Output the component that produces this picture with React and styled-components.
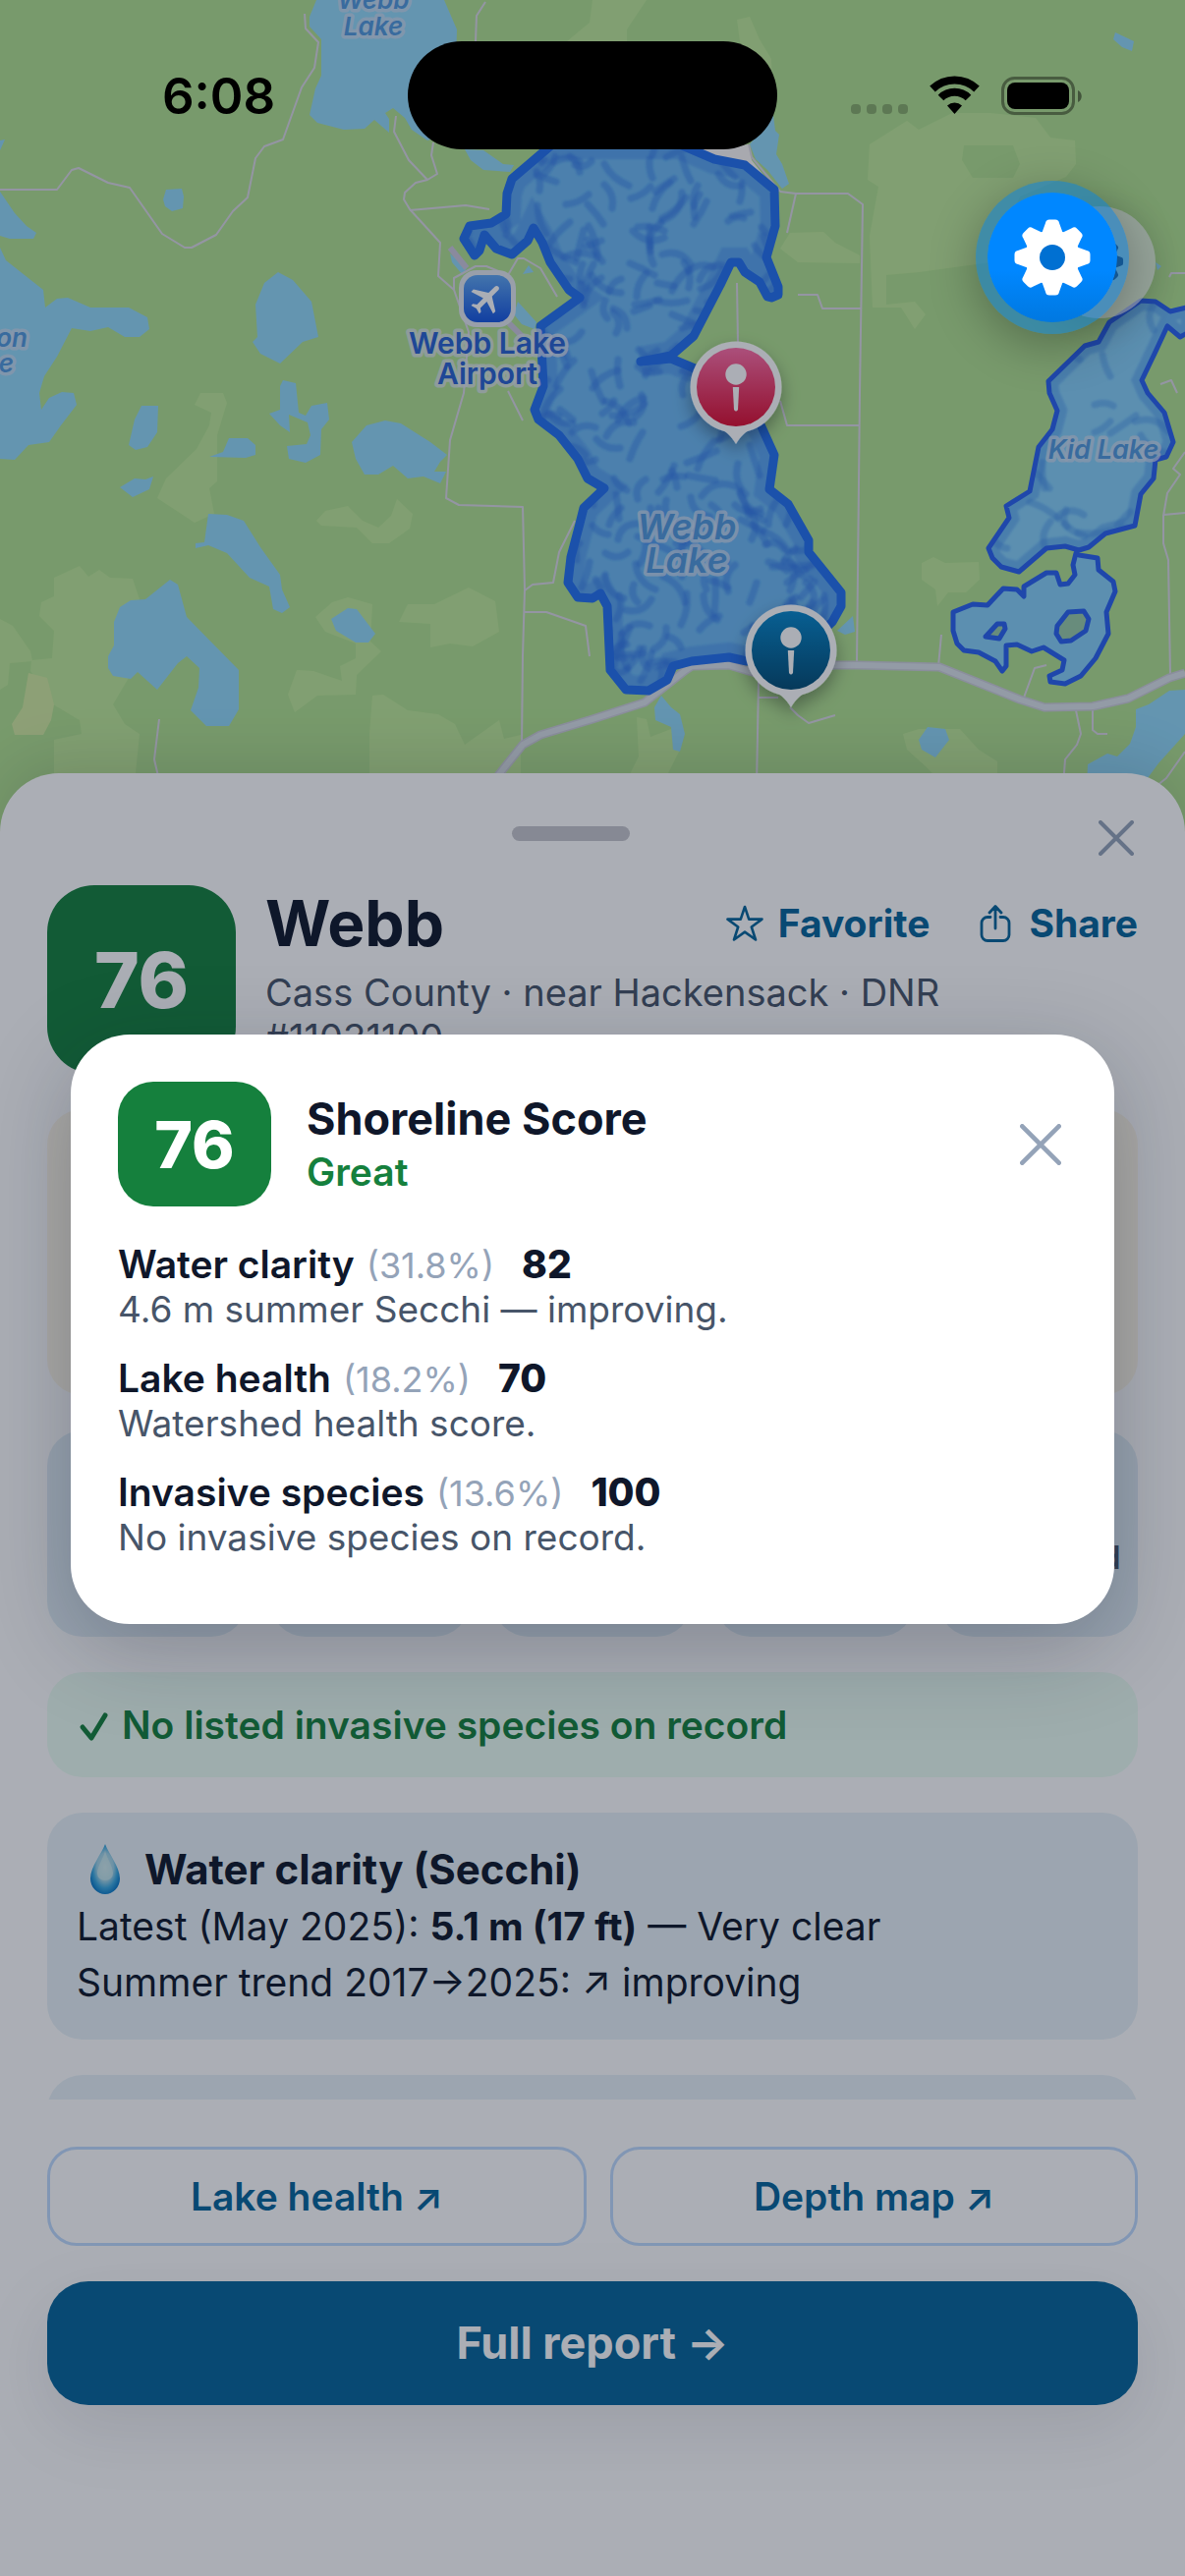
import styled, { createGlobalStyle } from "styled-components";
import { MdFlight } from "react-icons/md";

const GlobalStyle = createGlobalStyle`
  * {
    box-sizing: border-box;
  }

  body {
    margin: 0;
    background: #fff;
    color: #0f172a;
    font-family: Inter, "Liberation Sans", sans-serif;
  }

  button,
  a {
    font-family: inherit;
  }

  h1,
  h2,
  h3,
  p {
    margin: 0;
  }
`;

const WATER = [
  "838,0 820,50 820,80 850,120 850,230 835,270 818,350 840,375 910,395 965,393 990,367 1030,405 1030,362 1020,345 1040,330 1070,360 1090,395 1130,430 1200,400 1208,90 1175,0",
  "440,578 480,575 486,600 484,635 455,645 437,630 432,610",
  "0,585 40,650 70,690 95,712 88,730 25,730 0,720",
  "0,755 15,795 115,885 120,938 150,912 180,908 240,938 340,940 390,970 394,1005 370,1030 330,1030 285,1000 240,1010 190,1002 150,1090 118,1150 104,1200 108,1250 130,1215 165,1198 195,1200 204,1235 160,1300 130,1350 75,1358 38,1405 0,1400",
  "735,830 775,855 825,920 843,1030 800,1045 740,1110 690,1080 668,1045 680,1030 676,930 700,865",
  "750,1160 782,1170 790,1260 808,1270 825,1240 865,1230 872,1280 850,1310 848,1390 808,1412 765,1400 760,1362 810,1355 822,1330 815,1290 765,1265 768,1320 740,1300 712,1262 740,1250 742,1180",
  "375,1240 418,1240 415,1320 390,1365 360,1373 340,1360 355,1280",
  "555,1395 590,1380 605,1338 655,1337 676,1360 676,1390 650,1397",
  "932,1350 970,1300 1020,1283 1060,1292 1140,1350 1182,1388 1165,1410 1150,1440 1180,1440 1165,1475 1120,1455 1080,1462 1040,1422 1000,1450 965,1448 940,1400",
  "318,1488 355,1462 385,1465 405,1455 395,1495 350,1517",
  "550,1570 600,1572 645,1590 690,1670 742,1755 745,1800 768,1855 745,1872 722,1860 712,1790 660,1765 600,1690 550,1665 517,1675 517,1658 540,1655",
  "450,1770 470,1785 495,1885 632,2045 632,2165 605,2218 545,2218 505,2170 525,2100 527,2040 495,2005 470,2025 415,2105 365,2052 345,2073 300,2065 286,2040 286,2005 302,1970 302,1900 318,1855 345,1832 385,1830",
  "920,1856 945,1860 992,1935 975,1963 940,1963 890,1925 877,1890",
  "1190,775 1235,820 1225,840 1195,800",
  "1370,920 1420,985 1415,1005 1380,990 1360,960",
  "1230,455 1280,460 1330,500 1360,505 1350,525 1278,520 1245,490",
  "1985,440 2045,350 2052,400 2062,410 2055,470 2070,500 2088,560 2070,575 2030,520 2000,485",
  "2950,100 3000,125 2995,155 2970,145 2945,120",
  "2215,1925 2258,1882 2262,1930 2235,1938",
  "1750,2125 1775,2160 1800,2180 1812,2240 1800,2295 1780,2290 1775,2220 1735,2200 1732,2160",
  "2455,2220 2500,2225 2512,2260 2475,2312 2440,2290 2430,2260",
  "3136,2105 3095,2108 3040,2150 3005,2165 3005,2220 2990,2270 2955,2310 2930,2300 2878,2335 2875,2400 3020,2400 3065,2330 3136,2240",
  "1398,810 1412,830 1382,838",
  "0,430 14,425 0,460",
  "3058,800 3072,812 3062,826",
];

const MEADOW = [
  "1568,0 1710,0 1660,90 1660,125 1500,125 1560,70",
  "1950,60 1985,50 2010,120 2040,180 2050,420 1960,150",
  "2300,440 2400,370 2430,395 2520,345 2620,345 2740,360 2780,420 2845,430 2848,500 2820,540 2700,600 2620,800 2430,830 2345,840 2345,930 2420,920 2450,960 2420,1005 2385,940 2310,940 2300,720 2325,570 2295,550",
  "2090,710 2180,708 2210,740 2275,780 2275,805 2110,800 2065,760",
  "530,1200 590,1200 600,1230 575,1330 575,1470 555,1490 567,1570 515,1595 415,1520 440,1460 520,1370 555,1300 560,1260 515,1235",
  "143,1765 210,1728 235,1762 262,1740 290,1765 350,1768 370,1830 320,1900 300,2060 340,2070 300,2150 330,2210 368,2240 360,2360 340,2400 143,2400 143,2260 215,2240 210,2200 140,2150 80,2050 83,2015 138,2010 143,1925 105,1880 110,1840 143,1820",
  "0,1890 35,1910 80,1990 85,2020 25,2025 20,2090 0,2105",
  "838,1590 860,1560 920,1545 960,1590 1000,1610 1035,1575 1050,1525 1092,1570 1085,1615 1030,1660 985,1660 945,1610 850,1605",
  "835,1885 880,1840 920,1825 985,1845 980,1960 1010,1990 945,2060 940,2120 840,2125 780,2175 762,2120 785,2045 830,2048 905,2080 900,2035 940,2010 940,1965 860,1930",
  "1055,1900 1080,1845 1150,1845 1240,1795 1310,1835 1320,1930 1250,1975 1190,1965 1140,1978 1138,1905",
  "985,2125 1015,2120 1080,2170 1160,2180 1205,2210 1230,2275 1320,2200 1335,2255 1378,2245 1378,2400 978,2400 978,2240",
  "2440,1720 2470,1700 2500,1718 2590,1715 2592,1770 2555,1808 2510,1808 2480,1850 2475,1800 2440,1770",
  "2390,2240 2430,2225 2540,2225 2590,2290 2640,2325 2638,2400 2500,2400 2450,2340 2400,2290",
  "1685,2190 1710,2195 1720,2250 1775,2225 1800,2290 1760,2380 1650,2400 1690,2310",
];

const FOREST_GAP = "2550,445 2680,445 2700,500 2680,543 2575,543 2545,490";
const FIELD = "75,2055 125,2070 142,2150 135,2200 115,2243 38,2243 30,2210 60,2160";
const CLEARING = "1850,455 1980,440 1990,490 2050,575 1970,510 1890,485";

const ROADS = [
  "0,580 152,580 190,520 208,514 285,557 342,573 430,715 490,757 507,757 572,718 615,645 655,602 677,482 700,447 748,427 798,268 833,208 842,128 808,88 805,42",
  "1285,5 1262,48 1258,125",
  "1047,355 1042,402 1082,488 1132,548 1157,530 1142,475 1147,435",
  "1132,548 1100,558 1072,588 1068,608 1085,640 1165,740 1160,843 1200,885 1240,1015 1228,1200 1190,1345 1180,1520 1215,1543 1382,1548 1388,1800 1384,2000 1380,2270",
  "1085,642 1232,627 1295,638",
  "1200,885 1200,848 1258,813 1288,813 1345,840 1370,788 1385,788 1430,818 1475,905",
  "1522,1590 1480,1685 1463,1778 1410,1784 1388,1803",
  "1385,1868 1445,1868 1550,1910 1560,2005",
  "1345,1195 1382,1283",
  "420,2197 408,2320 418,2370",
  "2065,585 2105,590 2245,592 2282,625 2276,1200 2268,2025",
  "2105,592 2082,710",
  "1950,865 1952,1050",
  "2110,900 2162,900 2176,943 2280,942",
  "2065,1225 2082,1298 2275,1300",
  "1980,440 1990,480 2065,585",
  "2006,2080 2003,2400",
  "2006,2131 2060,2131",
  "2090,2160 2110,2185 2140,2207 2210,2183",
  "2492,1937 2482,2035",
  "2708,2130 2738,2040 2768,2030",
  "2848,2168 2860,2240 2850,2275 2818,2318 2812,2400",
  "2890,2165 2892,2230 2905,2240 2930,2240",
  "3136,1380 3105,1430 3122,1448 3090,1505 3078,1575 3078,1660 3092,1710 3096,2060",
  "3078,1572 3136,1567",
  "3093,845 3100,833 3136,835",
  "3070,1172 3100,1162 3115,1200",
  "3136,2295 3085,2375 3060,2400",
];

const HIGHWAY =
  "1300,2400 1320,2365 1382,2275 1430,2245 1568,2195 1705,2145 1815,2045 1830,2035 1930,2030 2000,2055 2210,2030 2268,2032 2485,2038 2700,2135 2765,2160 2890,2157 2985,2133 3095,2070 3136,2055";

const WEBB_LAKE =
  "1460,440 1355,545 1342,590 1340,655 1300,680 1243,690 1228,730 1255,780 1270,765 1282,718 1312,760 1355,778 1395,735 1412,695 1435,740 1455,800 1505,885 1535,910 1430,995 1438,1180 1415,1250 1425,1280 1480,1330 1530,1400 1555,1460 1598,1490 1545,1550 1535,1600 1510,1700 1503,1780 1530,1825 1568,1828 1588,1812 1608,1850 1615,2045 1655,2105 1715,2110 1765,2075 1780,2035 1830,2020 1930,2007 1975,2018 2100,2010 2203,1900 2225,1850 2225,1810 2140,1685 2140,1650 2085,1540 2035,1495 2050,1390 2010,1290 1960,1150 1838,1125 1775,1095 1695,1105 1775,1085 1835,1025 1905,870 1935,800 1955,800 1970,830 2010,860 2030,905 2040,910 2058,900 2060,875 2028,785 2052,690 2048,580 1970,505 1890,485 1800,440";

const KID_LAKE =
  "3018,918 3058,922 3096,952 3150,935 3150,1010 3122,1030 3090,995 3055,1080 3020,1160 3038,1200 3082,1260 3105,1350 3085,1395 3058,1405 3052,1460 3018,1510 3003,1605 2925,1630 2880,1670 2855,1680 2818,1668 2770,1675 2695,1745 2650,1730 2625,1705 2615,1675 2670,1580 2663,1545 2725,1500 2748,1365 2785,1310 2798,1255 2778,1200 2775,1165 2870,1055 2908,1045 2935,985";

const SOUTH_LAKE =
  "2848,1688 2855,1695 2905,1705 2906,1740 2945,1775 2950,1805 2928,1870 2933,1935 2900,2010 2860,2065 2818,2088 2780,2082 2778,2065 2810,2045 2815,2015 2762,1978 2730,1990 2692,1968 2663,1970 2662,2035 2652,2050 2635,2018 2590,1993 2550,1985 2533,1965 2523,1925 2523,1870 2575,1845 2612,1848 2655,1798 2690,1800 2710,1822 2708,1790 2770,1748 2795,1750 2805,1785 2825,1783 2845,1755 2838,1725";

const ISLANDS = [
  "2825,1868 2868,1865 2880,1890 2873,1925 2835,1955 2808,1960 2795,1935 2797,1910",
  "2608,1945 2640,1905 2658,1905 2660,1920 2645,1950",
];

// grid units -> svg units
const pts = (list) =>
  list
    .split(" ")
    .map((pair) => {
      const [x, y] = pair.split(",").map(Number);
      return `${Math.round(x / 2.6)},${Math.round(y / 3)}`;
    })
    .join(" ");

// Short depth strokes, always the same for the same seed
function depthStrokes(seed, count, x0, y0, w, h) {
  let s = seed;
  const next = () => {
    s = (s * 16807) % 2147483647;
    return s / 2147483647;
  };
  return Array.from({ length: count }, () => {
    const x = x0 + next() * w;
    const y = y0 + next() * h;
    const a = next() * Math.PI * 2;
    const bend = (next() - 0.5) * 2;
    const len = 16 + next() * 20;
    const dx = Math.cos(a) * len;
    const dy = Math.sin(a) * len;
    const p = [x, y, dx / 2 - dy * bend * 0.4, dy / 2 + dx * bend * 0.4, dx, dy];
    const [mx, my, cx, cy, ex, ey] = p.map((n) => Math.round(n));
    return `M${mx} ${my}q${cx} ${cy} ${ex} ${ey}`;
  });
}

const WEBB_STROKES = depthStrokes(77, 400, 470, 150, 390, 560);
const KID_STROKES = depthStrokes(31, 30, 1005, 310, 190, 260);

/* ---------- layout ---------- */

const Screen = styled.div`
  position: relative;
  display: flex;
  flex-direction: column;
  height: 100vh;
  overflow: hidden;
`;

const MapArea = styled.div`
  position: relative;
  flex: none;
  background: #b1e18f;

  > svg {
    display: block;
    width: 100%;
    height: auto;
  }
`;

const MapLabel = styled.text`
  font-size: ${(props) => props.$size}px;
  font-weight: 600;
  font-style: ${(props) => (props.$upright ? "normal" : "italic")};
  fill: ${(props) => (props.$upright ? "#2862d0" : "#5099dc")};
  stroke: ${(props) => (props.$upright ? "#e0e6f0" : "#ccdcf0")};
  stroke-width: 7px;
  stroke-opacity: 0.75;
  stroke-linejoin: round;
  paint-order: stroke;
  text-anchor: ${(props) => props.$anchor || "middle"};
`;

const MapButton = styled.button`
  position: absolute;
  top: 210px;
  right: 30px;
  width: 114px;
  height: 114px;
  padding: 0;
  border: 0;
  border-radius: 50%;
  background: rgba(245, 245, 250, 0.65);
  box-shadow: 0 6px 36px rgba(0, 0, 0, 0.15);
`;

const Sheet = styled.main`
  position: relative;
  display: flex;
  flex-direction: column;
  flex: 1;
  min-height: 0;
  margin-top: -73px;
  border-radius: 60px 60px 0 0;
  background: #fff;
  box-shadow: 0 -12px 60px rgba(0, 0, 0, 0.12);
`;

const SheetBar = styled.div`
  display: grid;
  grid-template-columns: 1fr 120px 1fr 44px;
  align-items: start;
  padding: 48px 48px 30px;
`;

const Grabber = styled.div`
  grid-column: 2;
  height: 15px;
  margin-top: 6px;
  border-radius: 8px;
  background: #c7c7cc;
`;

const IconButton = styled.button`
  display: flex;
  grid-column: -2;
  align-items: center;
  justify-content: center;
  width: ${(props) => props.$width}px;
  padding: 0;
  border: 0;
  background: none;
  color: #94a3b8;
`;

const SheetScroll = styled.div`
  display: flex;
  flex-direction: column;
  gap: 36px;
  flex: 1;
  min-height: 0;
  padding: 0 48px;
  overflow-y: auto;
  scrollbar-width: none;
`;

const LakeHeader = styled.header`
  display: flex;
  flex: none;
  gap: 30px;
`;

const ScoreBadge = styled.div`
  display: flex;
  flex: none;
  align-items: center;
  justify-content: center;
  width: ${(props) => (props.$large ? 192 : 156)}px;
  height: ${(props) => (props.$large ? 192 : 127)}px;
  border-radius: ${(props) => (props.$large ? 48 : 36)}px;
  background: #15803d;
  color: #fff;
  font-size: ${(props) => (props.$large ? 78 : 66)}px;
  font-weight: 800;
`;

const LakeInfo = styled.div`
  display: flex;
  flex-direction: column;
  flex: 1;
  gap: 8px;
`;

const TitleRow = styled.div`
  display: flex;
  align-items: center;
  justify-content: space-between;
`;

const LakeName = styled.h1`
  font-size: 64px;
  font-weight: 700;
  line-height: 78px;
`;

const LakePlace = styled.p`
  padding-right: 60px;
  color: #475569;
  font-size: 38px;
  line-height: 46px;
`;

const Actions = styled.div`
  display: flex;
  gap: 48px;
`;

const ActionButton = styled.button`
  display: flex;
  align-items: center;
  gap: 15px;
  padding: 0;
  border: 0;
  background: none;
  color: #06659a;
  font-size: 39px;
  font-weight: 700;
  line-height: 46px;
`;

const Card = styled.section`
  flex: none;
  min-height: ${(props) => props.$minHeight || 0}px;
  padding: 30px;
  border-radius: 36px;
  background: ${(props) => props.$background || "#e8f2f7"};
`;

const Tiles = styled.div`
  display: grid;
  grid-template-columns: repeat(5, 1fr);
  flex: none;
  gap: 24px;
`;

const Tile = styled.div`
  display: flex;
  align-items: flex-end;
  justify-content: center;
  height: 210px;
  padding-bottom: 61px;
  border-radius: 36px;
  background: #e2eff6;
  color: #475569;
  font-size: 32px;
  font-weight: 600;
`;

const ClearNotice = styled.p`
  display: flex;
  align-items: center;
  gap: 12px;
  color: #15803d;
  font-size: 39px;
  font-weight: 600;
  line-height: 47px;
`;

const CardTitle = styled.h2`
  display: flex;
  align-items: center;
  gap: 12px;
  margin-bottom: 2px;
  font-size: 42px;
  font-weight: 700;
  line-height: 55px;
`;

const CardLine = styled.p`
  font-size: 39px;
  line-height: 57px;
`;

const SheetFooter = styled.footer`
  display: flex;
  flex-direction: column;
  gap: 36px;
  padding: 48px 48px 174px;
`;

const LinkRow = styled.div`
  display: flex;
  gap: 24px;
`;

const OutlineLink = styled.a`
  flex: 1 1 auto;
  padding: 24px;
  border: 3px solid #bfdbfe;
  border-radius: 30px;
  color: #06659a;
  font-size: 39px;
  font-weight: 600;
  line-height: 47px;
  text-align: center;
  text-decoration: none;
`;

const ReportLink = styled.a`
  padding: 36px;
  border-radius: 42px;
  background: #06659a;
  box-shadow: 0 24px 72px rgba(15, 23, 42, 0.1);
  color: #fff;
  font-size: 45px;
  font-weight: 700;
  line-height: 54px;
  text-align: center;
  text-decoration: none;
`;

const Backdrop = styled.div`
  position: absolute;
  inset: 0;
  display: flex;
  align-items: center;
  padding: 186px 72px 102px;
  background: rgba(15, 23, 42, 0.35);
`;

const Dialog = styled.section`
  flex: 1;
  padding: 48px 48px 53px;
  border-radius: 60px;
  background: #fff;
  box-shadow: 0 24px 90px rgba(15, 23, 42, 0.25);
`;

const DialogHeader = styled.header`
  display: flex;
  align-items: center;
  gap: 36px;
  margin-bottom: 24px;
`;

const DialogHeading = styled.div`
  flex: 1;
`;

const DialogTitle = styled.h2`
  font-size: 45px;
  font-weight: 700;
  line-height: 56px;
`;

const Rating = styled.p`
  color: #15803d;
  font-size: 39px;
  font-weight: 600;
  line-height: 52px;
`;

const Factor = styled.div`
  padding: 12px 0;
`;

const FactorName = styled.h3`
  display: flex;
  align-items: baseline;
  height: 46px;
  font-size: 39px;
  font-weight: 600;
  line-height: 46px;
`;

const Weight = styled.span`
  margin: 0 28px 0 12px;
  color: #94a3b8;
  font-size: 36px;
  font-weight: 400;
`;

const FactorScore = styled.strong`
  font-weight: 800;
`;

const FactorDetail = styled.p`
  color: #475569;
  font-size: 37px;
  line-height: 46px;
`;

const StatusBar = styled.div`
  position: absolute;
  top: 42px;
  left: 0;
  right: 0;
  display: grid;
  grid-template-columns: 1fr 376px 1fr;
  align-items: center;
  justify-items: center;
  padding: 0 30px;
  color: #000;
`;

const Time = styled.time`
  font-size: 51px;
  font-weight: 600;
`;

const Island = styled.div`
  width: 100%;
  height: 110px;
  border-radius: 55px;
  background: #000;
`;

const FloatingSettings = styled.button`
  position: absolute;
  top: 184px;
  right: 57px;
  width: 156px;
  height: 156px;
  padding: 0;
  border: 12px solid rgba(0, 122, 220, 0.5);
  border-radius: 50%;
  background: linear-gradient(#0087ff 60%, #0078e0) padding-box;
  box-shadow: 0 12px 48px rgba(0, 0, 0, 0.28);

  svg {
    display: block;
    margin: auto;
  }
`;

/* ---------- icons ---------- */

function CloseIcon({ size }) {
  return (
    <svg width={size} height={size} viewBox="0 0 36 36" fill="none" aria-hidden="true">
      <path d="M2 2l32 32M34 2L2 34" stroke="currentColor" strokeWidth="4" strokeLinecap="round" />
    </svg>
  );
}

function StarIcon() {
  return (
    <svg width="38" height="38" viewBox="0 0 38 38" fill="none" aria-hidden="true">
      <path
        d="M19 2l4.200 12.600H36.500L25.800 22.500 30 35.500 19 27.600 8 35.500l4.200-13L1.500 14.600h13.300z"
        stroke="currentColor"
        strokeWidth="2.600"
        strokeLinejoin="round"
      />
    </svg>
  );
}

function ShareIcon() {
  return (
    <svg width="38" height="38" viewBox="0 0 38 38" fill="none" aria-hidden="true">
      <path
        d="M14 12.500h-3a6 6 0 0 0-6 6v12a6 6 0 0 0 6 6h16a6 6 0 0 0 6-6v-12a6 6 0 0 0-6-6h-3M19 24V2M13 8L19 1.500 25 8"
        stroke="currentColor"
        strokeWidth="2.800"
        strokeLinecap="round"
        strokeLinejoin="round"
      />
    </svg>
  );
}

function CheckIcon() {
  return (
    <svg width="34" height="34" viewBox="0 0 34 34" fill="none" aria-hidden="true">
      <path
        d="M6 19l9 11L29 7"
        stroke="currentColor"
        strokeWidth="5"
        strokeLinecap="round"
        strokeLinejoin="round"
      />
    </svg>
  );
}

function DropIcon() {
  return (
    <svg width="57" height="52" viewBox="0 0 57 52" aria-hidden="true">
      <defs>
        <radialGradient id="drop" cx="0.5" cy="0.46" r="0.56">
          <stop offset="0" stopColor="#c9e8ee" />
          <stop offset="0.5" stopColor="#9fd3e6" />
          <stop offset="0.75" stopColor="#3aa9e0" />
          <stop offset="1" stopColor="#0a7ac8" />
        </radialGradient>
      </defs>
      <path d="M29 0c3 9 15 23 15 35a15 16 0 0 1-30 0C14 23 26 9 29 0z" fill="url(#drop)" />
      <path d="M29 6c1 8 8 16 8 24a8 7 0 0 1-16 0c0-8 7-16 8-24z" fill="#d3eeee" opacity="0.6" />
    </svg>
  );
}

function GearIcon({ size, color, hole }) {
  return (
    <svg width={size} height={size} viewBox="-40 -40 80 80" fill={color} aria-hidden="true">
      <circle r="28" />
      {[0, 45, 90, 135, 180, 225, 270, 315].map((angle) => (
        <path
          key={angle}
          d="M-11-24L-7-35Q-6.500-38.500-3-38.500H3Q6.500-38.500 7-35L11-24Z"
          transform={`rotate(${angle})`}
        />
      ))}
      <circle r="13" fill={hole} />
    </svg>
  );
}

function StatusIcons() {
  return (
    <svg width="236" height="40" viewBox="0 0 236 40" aria-hidden="true">
      {[0, 16, 32, 48].map((x) => (
        <rect key={x} x={x} y="29" width="10" height="10" rx="4" opacity="0.22" />
      ))}
      <g fill="none" stroke="#000" strokeWidth="8">
        <path d="M83 13.500a32.500 32.500 0 0 1 45 0" />
        <path d="M91.500 22.500a20 20 0 0 1 28 0" />
      </g>
      <path d="M105.500 39l-7.500-8.500a11 11 0 0 1 15 0z" />
      <rect x="154.500" y="2.500" width="72" height="36" rx="12" fill="none" stroke="#000" strokeWidth="3" opacity="0.4" />
      <rect x="159" y="7" width="63" height="27" rx="8" />
      <path d="M231 15c5 2 5 10 0 12z" opacity="0.45" />
    </svg>
  );
}

function Pin({ x, y, fill }) {
  return (
    <g transform={`translate(${x} ${y})`}>
      <g filter="url(#pinShadow)">
        <path d="M-24 38C-10 44-5 50 0 58 5 50 10 44 24 38z" fill="#fff" />
        <circle r="46.500" fill="#fff" />
      </g>
      <circle r="40" fill={`url(#${fill})`} />
      <circle cy="-13" r="10.700" fill="#fff" />
      <path d="M-3.200 0H3.200L2 23Q0 26-2 23z" fill="#fff" />
    </g>
  );
}

function LakeMap() {
  return (
    <svg viewBox="0 0 1206 860" role="img" aria-label="Map of Webb Lake">
      <defs>
        <clipPath id="webbClip">
          <polygon points={pts(WEBB_LAKE)} />
        </clipPath>
        <clipPath id="kidClip">
          <polygon points={pts(KID_LAKE)} />
        </clipPath>
        <linearGradient id="pinRed" x1="0" y1="0" x2="0" y2="1">
          <stop offset="0" stopColor="#ff6ea6" />
          <stop offset="1" stopColor="#dc0c30" />
        </linearGradient>
        <linearGradient id="pinBlue" x1="0" y1="0" x2="0" y2="1">
          <stop offset="0" stopColor="#0586ca" />
          <stop offset="1" stopColor="#024c74" />
        </linearGradient>
        <linearGradient id="airport" x1="0" y1="0" x2="0" y2="1">
          <stop offset="0" stopColor="#5fa6f2" />
          <stop offset="1" stopColor="#1455e0" />
        </linearGradient>
        <filter id="pinShadow" x="-50%" y="-50%" width="200%" height="200%">
          <feDropShadow dx="0" dy="8" stdDeviation="9" floodOpacity="0.35" />
        </filter>
        <filter id="soft">
          <feGaussianBlur stdDeviation="1.2" />
        </filter>
      </defs>

      <g fill="#bfe998">
        {MEADOW.map((shape) => (
          <polygon key={shape} points={pts(shape)} />
        ))}
      </g>
      <polygon points={pts(FOREST_GAP)} fill="#b1e18f" />
      <polygon points={pts(FIELD)} fill="#d2ea9f" />
      <g fill="#92d9f8">
        {WATER.map((shape) => (
          <polygon key={shape} points={pts(shape)} />
        ))}
      </g>
      <polygon points={pts(CLEARING)} fill="#fbf8f6" />

      <g fill="none" stroke="#dcd9e4" strokeWidth="2" strokeLinejoin="round">
        {ROADS.map((line) => (
          <polyline key={line} points={pts(line)} />
        ))}
      </g>
      <path d="M458 252l17 21M518 329l14 14" stroke="#ccc8dc" strokeWidth="6" />
      <polyline points={pts(HIGHWAY)} fill="none" stroke="#cdced9" strokeWidth="9" strokeLinejoin="round" />
      <polyline points={pts(HIGHWAY)} fill="none" stroke="#dbe2e8" strokeWidth="6" strokeLinejoin="round" />

      <polygon points={pts(WEBB_LAKE)} fill="#6db9f3" />
      <g clipPath="url(#webbClip)">
        <g fill="none" stroke="#2f76e8" strokeLinecap="round" filter="url(#soft)">
          <polygon points={pts(WEBB_LAKE)} strokeWidth="30" opacity="0.3" />
          {WEBB_STROKES.map((d, i) => (
            <path key={i} d={d} strokeWidth="7" opacity="0.42" />
          ))}
        </g>
      </g>
      <polygon points={pts(WEBB_LAKE)} fill="none" stroke="#2270f0" strokeWidth="9" strokeLinejoin="round" />

      <polygon points={pts(KID_LAKE)} fill="#86d0f8" />
      <g clipPath="url(#kidClip)">
        <g fill="none" stroke="#3f8ce8" strokeLinecap="round" filter="url(#soft)">
          <polygon points={pts(KID_LAKE)} strokeWidth="20" opacity="0.4" />
          {KID_STROKES.map((d, i) => (
            <path key={i} d={d} strokeWidth="7" opacity="0.4" />
          ))}
        </g>
      </g>
      <polygon points={pts(KID_LAKE)} fill="none" stroke="#2862f0" strokeWidth="5" strokeLinejoin="round" />
      <polygon points={pts(SOUTH_LAKE)} fill="#86d0f8" stroke="#2862f0" strokeWidth="5" strokeLinejoin="round" />
      {ISLANDS.map((shape) => (
        <polygon key={shape} points={pts(shape)} fill="#98cba8" stroke="#2862f0" strokeWidth="5" strokeLinejoin="round" />
      ))}

      <MapLabel x="380" y="9" $size={26}>Webb</MapLabel>
      <MapLabel x="380" y="36" $size={26}>Lake</MapLabel>
      <MapLabel x="28" y="353" $size={26} $anchor="end">on</MapLabel>
      <MapLabel x="14" y="379" $size={26} $anchor="end">e</MapLabel>
      <MapLabel x="699" y="549" $size={36}>Webb</MapLabel>
      <MapLabel x="699" y="583" $size={36}>Lake</MapLabel>
      <MapLabel x="1123" y="467" $size={27}>Kid Lake</MapLabel>

      <rect x="467" y="275" width="58" height="58" rx="18" fill="#e3e8ee" />
      <rect x="472" y="280" width="48" height="48" rx="14" fill="url(#airport)" />
      <g transform="rotate(45 496 304)">
        <MdFlight x="476" y="284" size={40} color="#fff" />
      </g>
      <MapLabel x="496" y="360" $size={30} $upright>Webb Lake</MapLabel>
      <MapLabel x="496" y="391" $size={30} $upright>Airport</MapLabel>

      <Pin x={749} y={394} fill="pinRed" />
      <Pin x={805} y={662} fill="pinBlue" />
    </svg>
  );
}

/* ---------- page ---------- */

const factors = [
  { name: "Water clarity", weight: "31.8%", score: 82, detail: "4.6 m summer Secchi — improving." },
  { name: "Lake health", weight: "18.2%", score: 70, detail: "Watershed health score." },
  { name: "Invasive species", weight: "13.6%", score: 100, detail: "No invasive species on record." },
];

function ScoreDialog() {
  return (
    <Backdrop>
      <Dialog role="dialog" aria-modal="true" aria-labelledby="score-title">
        <DialogHeader>
          <ScoreBadge>76</ScoreBadge>
          <DialogHeading>
            <DialogTitle id="score-title">Shoreline Score</DialogTitle>
            <Rating>Great</Rating>
          </DialogHeading>
          <IconButton $width={54} aria-label="Close score">
            <CloseIcon size={42} />
          </IconButton>
        </DialogHeader>
        {factors.map((factor) => (
          <Factor key={factor.name}>
            <FactorName>
              {factor.name}
              <Weight>({factor.weight})</Weight>
              <FactorScore>{factor.score}</FactorScore>
            </FactorName>
            <FactorDetail>{factor.detail}</FactorDetail>
          </Factor>
        ))}
      </Dialog>
    </Backdrop>
  );
}

function LakeSheet() {
  return (
    <Sheet>
      <SheetBar>
        <Grabber />
        <IconButton $width={44} aria-label="Close lake">
          <CloseIcon size={36} />
        </IconButton>
      </SheetBar>

      <SheetScroll>
        <LakeHeader>
          <ScoreBadge $large>76</ScoreBadge>
          <LakeInfo>
            <TitleRow>
              <LakeName>Webb</LakeName>
              <Actions>
                <ActionButton>
                  <StarIcon />
                  Favorite
                </ActionButton>
                <ActionButton>
                  <ShareIcon />
                  Share
                </ActionButton>
              </Actions>
            </TitleRow>
            <LakePlace>Cass County · near Hackensack · DNR #11031100</LakePlace>
          </LakeInfo>
        </LakeHeader>

        <Card $background="#fdf7e8" $minHeight={291} />

        <Tiles>
          <Tile />
          <Tile />
          <Tile />
          <Tile />
          <Tile>Watershed</Tile>
        </Tiles>

        <Card $background="#ecfdf3">
          <ClearNotice>
            <CheckIcon />
            No listed invasive species on record
          </ClearNotice>
        </Card>

        <Card>
          <CardTitle>
            <DropIcon />
            Water clarity (Secchi)
          </CardTitle>
          <CardLine>
            Latest (May 2025): <strong>5.1 m (17 ft)</strong> — Very clear
          </CardLine>
          <CardLine>Summer trend 2017→2025: ↗ improving</CardLine>
        </Card>

        <Card $minHeight={231} />
      </SheetScroll>

      <SheetFooter>
        <LinkRow>
          <OutlineLink href="#health">Lake health ↗</OutlineLink>
          <OutlineLink href="#depth">Depth map ↗</OutlineLink>
        </LinkRow>
        <ReportLink href="#report">Full report →</ReportLink>
      </SheetFooter>
    </Sheet>
  );
}

export default function App() {
  return (
    <>
      <GlobalStyle />
      <Screen>
        <MapArea>
          <LakeMap />
          <MapButton aria-label="Map settings">
            <GearIcon size={50} color="#334155" hole="#dfe8e0" />
          </MapButton>
        </MapArea>
        <LakeSheet />
        <ScoreDialog />
        <StatusBar>
          <Time>6:08</Time>
          <Island />
          <StatusIcons />
        </StatusBar>
        <FloatingSettings aria-label="Settings">
          <GearIcon size={80} color="#fff" hole="#0070d2" />
        </FloatingSettings>
      </Screen>
    </>
  );
}
